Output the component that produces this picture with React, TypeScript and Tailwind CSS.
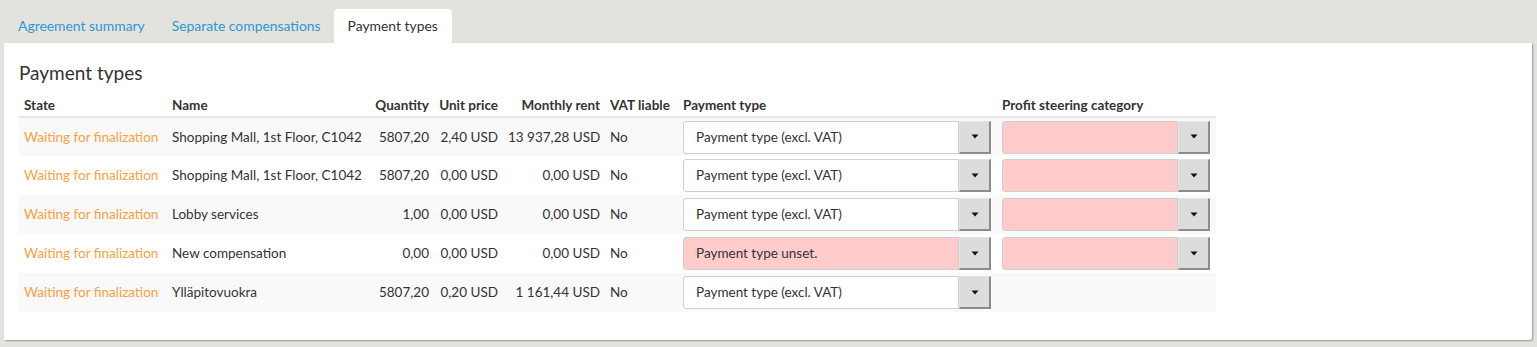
import React from 'react';

type Row = {
  name: string;
  qty: string;
  unit: string;
  rent: string;
  payment: string;
  paymentUnset?: boolean;
  profit: boolean;
};

const rows: Row[] = [
  { name: 'Shopping Mall, 1st Floor, C1042', qty: '5807,20', unit: '2,40 USD', rent: '13 937,28 USD', payment: 'Payment type (excl. VAT)', profit: true },
  { name: 'Shopping Mall, 1st Floor, C1042', qty: '5807,20', unit: '0,00 USD', rent: '0,00 USD', payment: 'Payment type (excl. VAT)', profit: true },
  { name: 'Lobby services', qty: '1,00', unit: '0,00 USD', rent: '0,00 USD', payment: 'Payment type (excl. VAT)', profit: true },
  { name: 'New compensation', qty: '0,00', unit: '0,00 USD', rent: '0,00 USD', payment: 'Payment type unset.', paymentUnset: true, profit: true },
  { name: 'Ylläpitovuokra', qty: '5807,20', unit: '0,20 USD', rent: '1 161,44 USD', payment: 'Payment type (excl. VAT)', profit: false },
];

function Select({ label, width, error }: { label: string; width: string; error?: boolean }) {
  return (
    <div className="flex h-[33px] items-stretch">
      <div
        className={`${width} flex items-center rounded-l-[3px] border border-[#cfcfcf] pl-[12px] text-[13.5px] text-[#333] ${error ? 'bg-[#ffcccb]' : 'bg-white'}`}
      >
        {label}
      </div>
      <div className="flex w-[32px] items-center justify-center border-t border-l border-[#e4e4e4] border-r-2 border-b-2 border-r-[#8c8c8c] border-b-[#8c8c8c] bg-[#dcdcdc]">
        <svg width="8" height="5" viewBox="0 0 8 5">
          <path d="M0.5 0.5 H7.5 L4 4.5 Z" fill="#111" />
        </svg>
      </div>
    </div>
  );
}

export default function App() {
  return (
    <div className="h-[347px] w-[1537px] bg-[#e3e3de] pt-[9px] font-['Lato',_sans-serif] text-[#333]">
      <div className="flex pl-[4px] text-[13.9px]">
        <div className="flex h-[34px] items-center px-[14px] text-[#2e96d3]">Agreement summary</div>
        <div className="flex h-[34px] items-center px-[13px] text-[#2e96d3]">Separate compensations</div>
        <div className="flex h-[34px] items-center rounded-t-[4px] bg-white px-[14px] text-[#333]">Payment types</div>
      </div>
      <div className="mx-[4px] h-[297px] w-[1528px] rounded-br-[3px] bg-white pl-[15px] pt-[17px] shadow-[1px_1px_2px_rgba(0,0,0,0.35)]">
        <h1 className="mb-[3px] text-[19px] leading-[26px] text-[#333]">Payment types</h1>
        <table className="w-[1197px] table-fixed border-collapse text-[13.5px]">
          <colgroup>
            <col className="w-[148px]" />
            <col className="w-[200px]" />
            <col className="w-[67px]" />
            <col className="w-[69px]" />
            <col className="w-[102px]" />
            <col className="w-[73px]" />
            <col className="w-[319px]" />
            <col className="w-[219px]" />
          </colgroup>
          <thead>
            <tr className="h-[28px] border-b-2 border-[#e6e6e6] font-bold">
              <th className="whitespace-nowrap px-[5px] pb-[1px] text-left align-bottom">State</th>
              <th className="whitespace-nowrap px-[5px] pb-[1px] text-left align-bottom">Name</th>
              <th className="whitespace-nowrap px-[5px] pb-[1px] text-right align-bottom">Quantity</th>
              <th className="whitespace-nowrap px-[5px] pb-[1px] text-right align-bottom">Unit price</th>
              <th className="whitespace-nowrap px-[5px] pb-[1px] text-right align-bottom">Monthly rent</th>
              <th className="whitespace-nowrap px-[5px] pb-[1px] text-left align-bottom">VAT liable</th>
              <th className="whitespace-nowrap px-[5px] pb-[1px] text-left align-bottom">Payment type</th>
              <th className="whitespace-nowrap px-[5px] pb-[1px] text-left align-bottom">Profit steering category</th>
            </tr>
          </thead>
          <tbody>
            {rows.map((r, i) => (
              <tr key={i} className={`h-[39px] ${i % 2 === 0 ? 'bg-[#f9f9f9]' : 'bg-white'}`}>
                <td className="whitespace-nowrap px-[5px] text-[#f7a23f]">Waiting for finalization</td>
                <td className="whitespace-nowrap px-[5px]">{r.name}</td>
                <td className="whitespace-nowrap px-[5px] text-right">{r.qty}</td>
                <td className="whitespace-nowrap px-[5px] text-right">{r.unit}</td>
                <td className="whitespace-nowrap px-[5px] text-right">{r.rent}</td>
                <td className="whitespace-nowrap px-[5px]">No</td>
                <td className="px-[5px]">
                  <Select label={r.payment} width="w-[276px]" error={r.paymentUnset} />
                </td>
                <td className="px-[5px]">
                  {r.profit && <Select label="" width="w-[176px]" error />}
                </td>
              </tr>
            ))}
          </tbody>
        </table>
      </div>
    </div>
  );
}
